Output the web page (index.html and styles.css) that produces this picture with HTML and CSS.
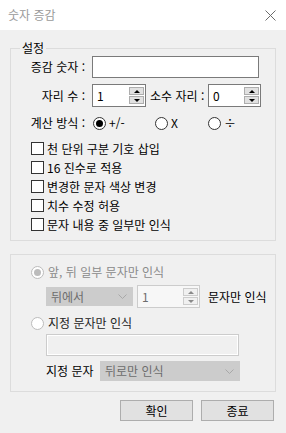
FILE: index.html
```html
<!DOCTYPE html>
<html lang="ko">
<head>
<meta charset="utf-8">
<title>숫자 증감</title>
<link rel="stylesheet" href="styles.css">
</head>
<body>
<div class="titlebar">
  <span class="title">숫자 증감</span>
  <svg class="close" width="11" height="11" viewBox="0 0 11 11"><path d="M0.5 0.5L10.5 10.5M10.5 0.5L0.5 10.5" stroke="#6b6b6b" stroke-width="1" fill="none"/></svg>
</div>
<div class="content">
  <fieldset class="group group-settings">
    <legend>설정</legend>
    <div class="frow r1">
      <span class="lbl">증감 숫자 :</span>
      <div class="textbox wide"></div>
    </div>
    <div class="frow r2">
      <span class="lbl">자리 수 :</span>
      <div class="spin spin-a">
        <span class="spin-val">1</span>
        <div class="spin-btns"><span class="sb up"></span><span class="sb down"></span></div>
      </div>
      <span class="lbl2">소수 자리 :</span>
      <div class="spin spin-b">
        <span class="spin-val">0</span>
        <div class="spin-btns"><span class="sb up"></span><span class="sb down"></span></div>
      </div>
    </div>
    <div class="frow r3">
      <span class="lbl">계산 방식 :</span>
      <div class="ropt ropt-1"><span class="radio on"></span><span>+/-</span></div>
      <div class="ropt ropt-2"><span class="radio"></span><span>X</span></div>
      <div class="ropt ropt-3"><span class="radio"></span><span>÷</span></div>
    </div>
    <div class="checks">
      <div class="check"><span class="cbox"></span><span>천 단위 구분 기호 삽입</span></div>
      <div class="check"><span class="cbox"></span><span>16 진수로 적용</span></div>
      <div class="check"><span class="cbox"></span><span>변경한 문자 색상 변경</span></div>
      <div class="check"><span class="cbox"></span><span>치수 수정 허용</span></div>
      <div class="check"><span class="cbox"></span><span>문자 내용 중 일부만 인식</span></div>
    </div>
  </fieldset>

  <fieldset class="group group-partial">
    <div class="opt opt-1 disabled">
      <span class="radio dis on"></span><span>앞, 뒤 일부 문자만 인식</span>
    </div>
    <div class="sub-row">
      <div class="combo combo-a"><span>뒤에서</span>
        <svg width="9" height="5" viewBox="0 0 9 5"><path d="M0.5 0.5L4.5 4.5L8.5 0.5" stroke="#a8a8a8" fill="none"/></svg>
      </div>
      <div class="spin spin-dis">
        <span class="spin-val">1</span>
        <div class="spin-btns"><span class="sb up"></span><span class="sb down"></span></div>
      </div>
      <span class="after">문자만 인식</span>
    </div>
    <div class="opt opt-2">
      <span class="radio dis"></span><span>지정 문자만 인식</span>
    </div>
    <div class="textbox textbox-dis"></div>
    <div class="label-row">
      <span class="lbl3">지정 문자</span>
      <div class="combo combo-b"><span>뒤로만 인식</span>
        <svg width="9" height="5" viewBox="0 0 9 5"><path d="M0.5 0.5L4.5 4.5L8.5 0.5" stroke="#a8a8a8" fill="none"/></svg>
      </div>
    </div>
  </fieldset>

  <div class="buttons">
    <button class="btn">확인</button>
    <button class="btn">종료</button>
  </div>
</div>
</body>
</html>
```

FILE: styles.css
```css
* { box-sizing: border-box; }
html, body { margin: 0; padding: 0; }
body {
  width: 286px;
  height: 433px;
  overflow: hidden;
  background: #f0f0f0;
  font-family: "Noto Sans CJK KR", "Noto Sans", sans-serif;
  font-size: 12px;
  line-height: 16px;
  color: #000;
}
.titlebar {
  height: 30px;
  background: #fff;
  display: flex;
  align-items: center;
  justify-content: space-between;
  padding: 0 10px 0 8px;
}
.title { color: #9a9a9a; }
.content { padding: 0 10px; }

.group {
  margin: 0;
  padding: 0;
  border: 1px solid #dcdcdc;
  min-inline-size: 0;
}
.group-settings { margin-top: 11px; padding: 1px 0 6px 0; }
.group-settings legend { margin-left: 9px; padding: 0 2px; line-height: 14px; }

.frow { display: flex; align-items: center; }
.lbl { width: 74px; margin-right: 7px; text-align: right; white-space: nowrap; }
.r1 { height: 22px; }
.r2 { height: 23px; margin-top: 6px; }
.r3 { height: 16px; margin-top: 8px; }

.textbox { height: 22px; border: 1px solid #7a7a7a; background: #fff; }
.wide { width: 167px; }

.spin {
  height: 23px;
  border: 1px solid #7a7a7a;
  background: #fff;
  display: flex;
  justify-content: space-between;
  align-items: flex-start;
}
.spin-a { width: 54px; }
.spin-b { width: 53px; }
.spin-val { padding-left: 4px; line-height: 21px; }
.spin-btns { display: flex; flex-direction: column; gap: 1px; padding-top: 2px; margin-right: 1px; }
.sb {
  width: 15px;
  height: 8px;
  background: #e1e1e1;
  border: 1px solid #adadad;
  display: flex;
  align-items: center;
  justify-content: center;
}
.sb::after { content: ""; width: 0; height: 0; border-left: 3px solid transparent; border-right: 3px solid transparent; }
.sb.up::after { border-bottom: 3px solid #000; }
.sb.down::after { border-top: 3px solid #000; }
.lbl2 { width: 62px; padding-left: 4px; white-space: nowrap; }

.ropt { display: flex; align-items: center; gap: 3px; }
.ropt-1 { width: 63px; padding-left: 1px; }
.ropt-2 { width: 53px; }
.radio {
  width: 13px;
  height: 13px;
  border-radius: 50%;
  border: 1px solid #333;
  background: #fff;
  display: flex;
  align-items: center;
  justify-content: center;
  flex: none;
}
.radio.on::after { content: ""; width: 7px; height: 7px; border-radius: 50%; background: #000; }
.radio.dis { border-color: #bcbcbc; }
.radio.dis.on { background: #fff; }
.radio.dis.on::after { background: #bcbcbc; }

.checks { margin-top: 8px; }
.check { height: 19px; display: flex; align-items: center; gap: 3px; padding-left: 20px; }
.cbox { width: 13px; height: 13px; border: 1px solid #333; background: #fff; flex: none; }

.group-partial { margin-top: 13px; padding: 9px 0 10px 0; }
.opt { height: 16px; display: flex; align-items: center; gap: 4px; padding-left: 20px; }
.opt.disabled { color: #8a8a8a; }
.opt-2 { margin-top: 7px; color: #222; }
.sub-row { height: 23px; margin-top: 5px; padding-left: 35px; display: flex; align-items: center; }
.combo {
  height: 19px;
  background: #cccccc;
  border: 1px solid #cccccc;
  color: #6d6d6d;
  display: flex;
  align-items: center;
  justify-content: space-between;
  padding: 0 5px 0 4px;
}
.combo-a { width: 87px; }
.spin-dis { width: 63px; margin-left: 4px; border-color: #cccccc; background: #f7f7f7; color: #6d6d6d; }
.spin-dis .sb { background: #f0f0f0; border-color: #cccccc; }
.spin-dis .sb.up::after { border-bottom-color: #8a8a8a; }
.spin-dis .sb.down::after { border-top-color: #8a8a8a; }
.after { margin-left: 8px; }
.textbox-dis { width: 193px; margin: 3px 0 0 35px; border-color: #cccccc; background: #f0f0f0; box-shadow: inset 0 0 0 1px #fff; }
.label-row { height: 20px; margin-top: 5px; padding-left: 35px; display: flex; align-items: center; }
.lbl3 { width: 54px; white-space: nowrap; }
.combo-b { width: 140px; height: 20px; }

.buttons { margin-top: 8px; padding-right: 2px; display: flex; justify-content: flex-end; gap: 8px; }
.btn {
  width: 73px;
  height: 21px;
  margin: 0;
  padding: 0;
  background: #e1e1e1;
  border: 1px solid #adadad;
  font: inherit;
  line-height: 19px;
  color: #000;
}
```
